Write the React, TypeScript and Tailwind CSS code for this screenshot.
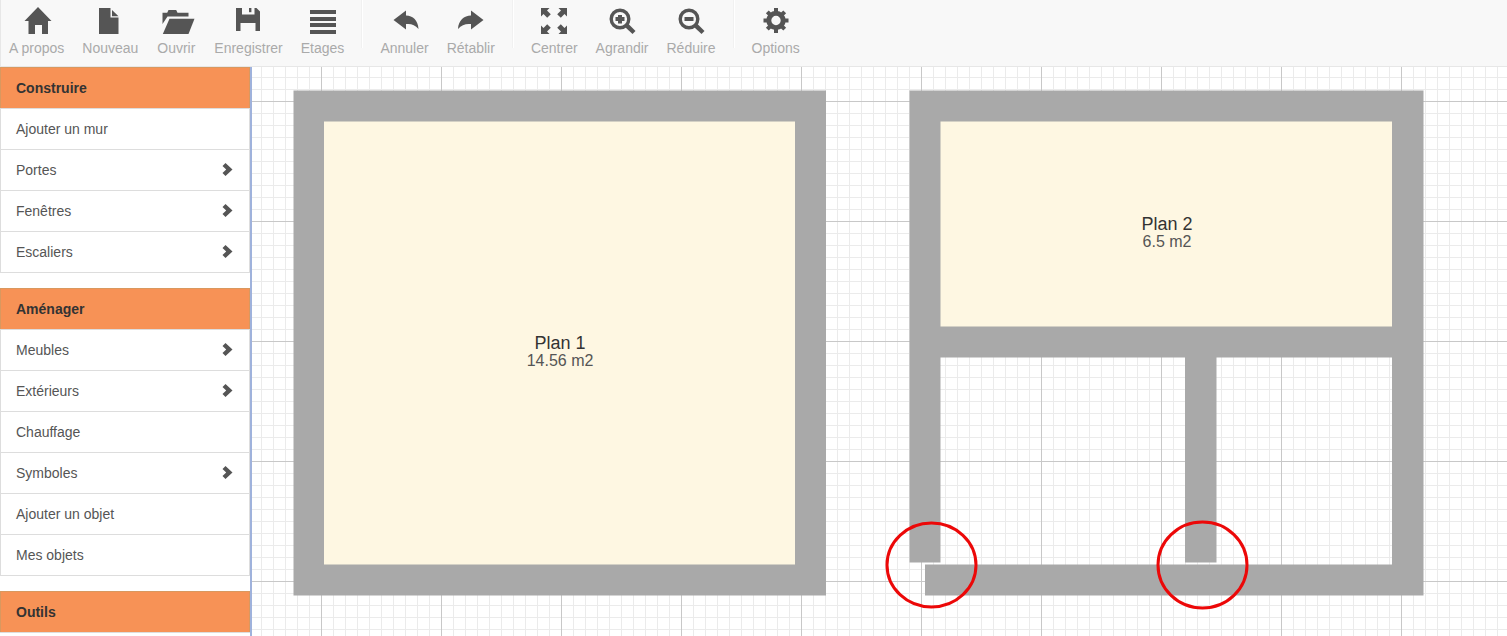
import { Fragment, type ReactNode } from 'react'

type Tool = { label: string; icon: ReactNode }
type Entry = { label: string; sub?: boolean }

const TOOL_GROUPS: Tool[][] = [
  [
    { label: 'A propos', icon: <path d="M1 0L14.5 14H11V27H5V18H-2V27H-8.5V14H-12.5Z" /> },
    {
      label: 'Nouveau',
      icon: (
        <>
          <path d="M-11 1H.5V10.5H8.5V27H-11Z" />
          <path d="M2 3L8.5 9.2H2Z" />
        </>
      ),
    },
    {
      label: 'Ouvrir',
      icon: (
        <>
          <path d="M-13.5 17V5.8H-8.8L-7.5 3H.2L1.5 5.8H12.5V9.4H-8.5Z" />
          <path d="M-6.5 11.8H18.5L12.5 27H-13.2Z" />
        </>
      ),
    },
    {
      label: 'Enregistrer',
      icon: (
        <>
          <path d="M-13 1H-7V7.5H5.5V1H7.5L11 4.5V24H6.5V16H-8.5V24H-13Z" />
          <path d="M0 1H2.4V5.2H0Z" />
        </>
      ),
    },
    {
      label: 'Etages',
      icon: <path d="M-13 3H13V7H-13ZM-13 10H13V14H-13ZM-13 16H13V20H-13ZM-13 23H13V27H-13Z" />,
    },
  ],
  [
    { label: 'Annuler', icon: <path d="M-11.5 13L1 3.5V8.5C8 9 13 13 13.5 22C10 17.5 6 16.5 1 17V22.5Z" /> },
    { label: 'Rétablir', icon: <path d="M12.5 13L0 3.5V8.5C-7 9 -12.5 13 -13 22C-9.5 17.5 -5 16.5 0 17V22.5Z" /> },
  ],
  [
    {
      label: 'Centrer',
      icon: (
        <>
          <path d="M-13 1H-4.5L-7 3.5L-3.2 7.2L-6.8 10.8L-10.5 7L-13 9.5Z" />
          <path d="M13 1H4.5L7 3.5L3.2 7.2L6.8 10.8L10.5 7L13 9.5Z" />
          <path d="M-13 27H-4.5L-7 24.5L-3.2 20.8L-6.8 17.2L-10.5 21L-13 18.5Z" />
          <path d="M13 27H4.5L7 24.5L3.2 20.8L6.8 17.2L10.5 21L13 18.5Z" />
        </>
      ),
    },
    {
      label: 'Agrandir',
      icon: (
        <>
          <circle cx="-2" cy="12" r="8.8" fill="none" stroke="currentColor" strokeWidth="3.4" />
          <path d="M3 20L6 16.5L13.5 24L10.5 27Z" />
          <path d="M-4 8H0V10H2.5V14H0V16.5H-4V14H-6.5V10H-4Z" />
        </>
      ),
    },
    {
      label: 'Réduire',
      icon: (
        <>
          <circle cx="-2" cy="12" r="8.8" fill="none" stroke="currentColor" strokeWidth="3.4" />
          <path d="M3 20L6 16.5L13.5 24L10.5 27Z" />
          <path d="M-6.5 10H2.5V14H-6.5Z" />
        </>
      ),
    },
  ],
  [
    {
      label: 'Options',
      icon: (
        <>
          <circle cx="0" cy="13.5" r="7.2" fill="none" stroke="currentColor" strokeWidth="5" />
          <path
            d="M0 1V6M0 21V26M-12.5 13.5H-8M8 13.5H12.5M-8.7 4.8L-5.5 8M5.5 19L8.7 22.2M8.7 4.8L5.5 8M-5.5 19L-8.7 22.2"
            stroke="currentColor"
            strokeWidth="4"
          />
        </>
      ),
    },
  ],
]

const SECTIONS: { title: string; entries: Entry[] }[] = [
  {
    title: 'Construire',
    entries: [
      { label: 'Ajouter un mur' },
      { label: 'Portes', sub: true },
      { label: 'Fenêtres', sub: true },
      { label: 'Escaliers', sub: true },
    ],
  },
  {
    title: 'Aménager',
    entries: [
      { label: 'Meubles', sub: true },
      { label: 'Extérieurs', sub: true },
      { label: 'Chauffage' },
      { label: 'Symboles', sub: true },
      { label: 'Ajouter un objet' },
      { label: 'Mes objets' },
    ],
  },
  { title: 'Outils', entries: [] },
]

function Toolbar() {
  return (
    <header className="flex shrink-0 items-start border-b border-l border-[#e7e7e7] bg-[#f8f8f8] pb-2">
      {TOOL_GROUPS.map((group, i) => (
        <Fragment key={i}>
          {i > 0 && <span className="mx-[9px] h-12 w-0.5 border-l border-[#f1f1f1] bg-white" />}
          <div className="flex gap-0.5">
            {group.map(tool => (
              <button
                key={tool.label}
                type="button"
                className="flex cursor-pointer flex-col items-center px-2 pt-[7px] text-[14px] leading-5 text-[#aaa]"
              >
                <svg viewBox="-20 0 40 28" width="40" height="28" className="mb-[3px] fill-current text-[#555]" aria-hidden="true">
                  {tool.icon}
                </svg>
                {tool.label}
              </button>
            ))}
          </div>
        </Fragment>
      ))}
    </header>
  )
}

function Sidebar() {
  return (
    <nav className="flex w-[252px] shrink-0 flex-col gap-[15px] overflow-hidden border-r-2 border-[#9fb2dc] bg-white text-[14px] leading-5">
      {SECTIONS.map(section => (
        <section key={section.title} className="shrink-0 border-b border-[#ddd]">
          <h2 className="border border-b-0 border-[#d9985f] bg-[#f79256] px-[15px] py-[10px] font-bold text-[#333]">
            {section.title}
          </h2>
          <ul>
            {section.entries.map(entry => (
              <li key={entry.label}>
                <a
                  href="#"
                  className="flex items-center justify-between border border-b-0 border-[#ddd] px-[15px] py-[10px] text-[#555]"
                >
                  {entry.label}
                  {entry.sub && (
                    <svg viewBox="0 0 14 14" width="14" height="14" className="fill-current" aria-hidden="true">
                      <path d="M2.5 3L5.5 0L12.5 6.5L5.5 13L2.5 10L6.2 6.500Z" />
                    </svg>
                  )}
                </a>
              </li>
            ))}
          </ul>
        </section>
      ))}
    </nav>
  )
}

function PlanCanvas() {
  return (
    <main className="min-w-0 flex-1 overflow-hidden bg-white">
      <svg width="100%" height="100%" className="block" role="img" aria-label="Plan">
        <defs>
          <pattern id="minor" x="9" y="10" width="12" height="12" patternUnits="userSpaceOnUse">
            <path d="M.5 0V12M0 .5H12" stroke="#ebebeb" fill="none" />
          </pattern>
          <pattern id="major" x="69" y="34" width="120" height="120" patternUnits="userSpaceOnUse">
            <path d="M.5 0V120M0 .5H120" stroke="#c8c8c8" fill="none" />
          </pattern>
        </defs>
        <rect width="100%" height="100%" fill="url(#minor)" />
        <rect width="100%" height="100%" fill="url(#major)" />

        {/* Plan 1 */}
        <path d="M41.500 23.500H574V528.500H41.500Z" fill="#a9a9a9" />
        <rect x="72" y="54.5" width="471" height="443" fill="#fef7e2" />

        {/* Plan 2, the lower walls stop short of each other */}
        <path
          d="M657.5 23.500H1171.500V528.500H673V497.500H1140V290.500H964.500V495.500H933V290.500H688.500V495.500H657.5Z"
          fill="#a9a9a9"
        />
        <rect x="688.5" y="54.5" width="451.5" height="205" fill="#fef7e2" />

        <g textAnchor="middle" fontFamily="'Liberation Sans', Arial, sans-serif">
          <text x="308" y="282" fontSize="18" fill="#333">Plan 1</text>
          <text x="308" y="299" fontSize="16" fill="#555">14.56 m2</text>
          <text x="915" y="163" fontSize="18" fill="#333">Plan 2</text>
          <text x="915" y="180" fontSize="16" fill="#555">6.5 m2</text>
        </g>

        <g fill="none" stroke="#ec0808" strokeWidth="3">
          <ellipse cx="679.5" cy="498" rx="44.5" ry="42" />
          <ellipse cx="950.5" cy="498" rx="44.5" ry="43" />
        </g>
      </svg>
    </main>
  )
}

export default function App() {
  return (
    <div className="flex h-screen flex-col overflow-hidden bg-white font-['Liberation_Sans',Arial,sans-serif]">
      <Toolbar />
      <div className="flex min-h-0 flex-1">
        <Sidebar />
        <PlanCanvas />
      </div>
    </div>
  )
}
